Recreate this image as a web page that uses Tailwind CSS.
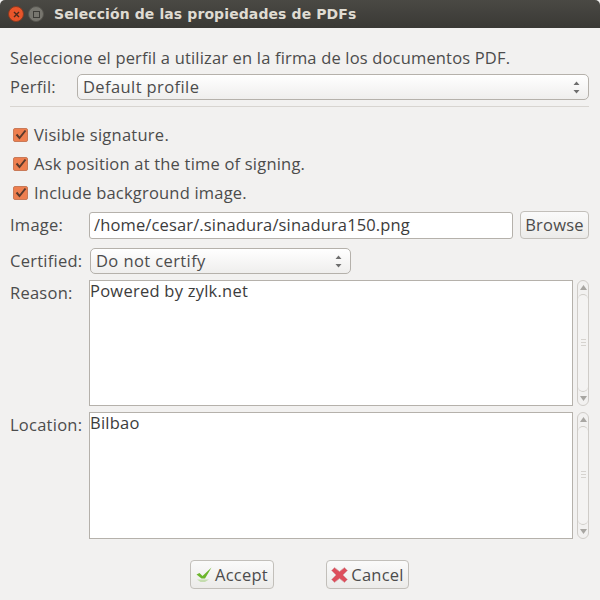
<!DOCTYPE html>
<html lang="es">
<head>
    <meta charset="UTF-8">
    <title>Selección de las propiedades de PDFs</title>
    <script src="https://cdn.jsdelivr.net/npm/@tailwindcss/browser@4"></script>
</head>
<body class="w-[600px] h-[600px] overflow-hidden bg-[#f2f1f0] text-[#4c4c4c] font-['Open_Sans','Noto_Sans',sans-serif] text-[16.5px] tracking-[0.25px] leading-[20px]">

    <!-- Title bar -->
    <div class="h-[28px] flex items-center rounded-t-[5px] bg-gradient-to-b from-[#4a4944] to-[#3a3935] pl-[8px]">
        <div class="w-[16px] h-[16px] rounded-full bg-[#e8552a] border border-[#8a3a20] flex items-center justify-center">
            <svg width="7" height="7" viewBox="0 0 7 7"><path d="M1 1L6 6M6 1L1 6" stroke="#4a2a1c" stroke-width="1.4"/></svg>
        </div>
        <div class="ml-[4px] w-[16px] h-[16px] rounded-full bg-[#77766f] border border-[#55544e] flex items-center justify-center">
            <div class="w-[7px] h-[7px] border border-[#3c3b37]"></div>
        </div>
        <div class="ml-[10px] text-[#dfdbd2] font-bold text-[14px] tracking-[0.1px] font-['DejaVu_Sans','Noto_Sans',sans-serif]">Selección de las propiedades de PDFs</div>
    </div>

    <div class="pl-[10px] pr-[11px]">
        <div class="h-[46px] pt-[20px] whitespace-nowrap tracking-[0.17px]">Seleccione el perfil a utilizar en la firma de los documentos PDF.</div>

        <div class="flex items-center mb-[6px]">
            <div class="w-[67px]">Perfil:</div>
            <div class="flex-1 h-[26px] rounded-[5px] border border-[#b5b1ab] bg-gradient-to-b from-white to-[#efeeed] flex items-center justify-between pl-[5px] pr-[8px]">
                <span class="tracking-[0.4px]">Default profile</span>
                <svg width="7" height="13" viewBox="0 0 7 13"><path d="M3.5 0.5L6.5 4H0.5ZM3.5 12.5L0.5 9H6.5Z" fill="#6e6e6e"/></svg>
            </div>
        </div>
        <div class="h-px bg-[#d8d5d1] mb-[18px]"></div>

        <!-- Checkboxes -->
        <div class="flex flex-col gap-[9px] pl-[3px] mb-[8px]">
            <div class="h-[20px] flex items-center gap-[6px]">
                <div class="w-[15px] h-[14px] rounded-[2px] bg-[#ee7f4f] border border-[#c97a58] flex items-center justify-center">
                    <svg width="13" height="12" viewBox="0 0 13 12"><path d="M2.5 5.5L5.5 9L11.5 1.5" fill="none" stroke="#5a3a2c" stroke-width="2"/></svg>
                </div>
                <span>Visible signature.</span>
            </div>
            <div class="h-[20px] flex items-center gap-[6px]">
                <div class="w-[15px] h-[14px] rounded-[2px] bg-[#ee7f4f] border border-[#c97a58] flex items-center justify-center">
                    <svg width="13" height="12" viewBox="0 0 13 12"><path d="M2.5 5.5L5.5 9L11.5 1.5" fill="none" stroke="#5a3a2c" stroke-width="2"/></svg>
                </div>
                <span class="tracking-[0.2px]">Ask position at the time of signing.</span>
            </div>
            <div class="h-[20px] flex items-center gap-[6px]">
                <div class="w-[15px] h-[14px] rounded-[2px] bg-[#ee7f4f] border border-[#c97a58] flex items-center justify-center">
                    <svg width="13" height="12" viewBox="0 0 13 12"><path d="M2.5 5.5L5.5 9L11.5 1.5" fill="none" stroke="#5a3a2c" stroke-width="2"/></svg>
                </div>
                <span class="tracking-[0.2px]">Include background image.</span>
            </div>
        </div>

        <!-- Image -->
        <div class="flex items-center h-[28px] mb-[9px]">
            <div class="w-[79px]">Image:</div>
            <div class="w-[424px] h-[27px] rounded-[3px] border border-[#b5b1ab] bg-white flex items-center pl-[4px] text-[#3c3c3c] tracking-[0.14px]">/home/cesar/.sinadura/sinadura150.png</div>
            <div class="ml-[7px] w-[69px] h-[28px] rounded-[4px] border border-[#c2bfba] bg-gradient-to-b from-[#fafafa] to-[#ecebe9] flex items-center justify-center">Browse</div>
        </div>

        <!-- Certified -->
        <div class="flex items-center h-[26px] mb-[6px]">
            <div class="w-[80px]">Certified:</div>
            <div class="w-[261px] h-[26px] rounded-[5px] border border-[#b5b1ab] bg-gradient-to-b from-white to-[#efeeed] flex items-center justify-between pl-[5px] pr-[8px]">
                <span class="tracking-[0.4px]">Do not certify</span>
                <svg width="7" height="13" viewBox="0 0 7 13"><path d="M3.5 0.5L6.5 4H0.5ZM3.5 12.5L0.5 9H6.5Z" fill="#6e6e6e"/></svg>
            </div>
        </div>

        <!-- Reason -->
        <div class="flex h-[126px] mb-[6px]">
            <div class="w-[79px] pt-[3px]">Reason:</div>
            <div class="w-[484px] border border-[#b5b1ab] bg-white text-[#3c3c3c]">Powered by zylk.net</div>
            <div class="ml-[4px] w-[12px] rounded-[6px] border border-[#cfccc8] flex flex-col items-center overflow-hidden">
                <svg class="my-[4px] shrink-0" width="7" height="5" viewBox="0 0 7 5"><path d="M3.5 0L7 5H0Z" fill="#a8a6a2"/></svg>
                <div class="flex-1 w-full rounded-[6px] border-y border-[#cfccc8] bg-[#f4f3f2] flex items-center justify-center">
                    <div class="w-[5px] h-[9px] bg-[repeating-linear-gradient(#d6d3cf_0_1px,transparent_1px_3px)]"></div>
                </div>
                <svg class="my-[4px] shrink-0" width="7" height="5" viewBox="0 0 7 5"><path d="M3.5 5L7 0H0Z" fill="#a8a6a2"/></svg>
            </div>
        </div>

        <!-- Location -->
        <div class="flex h-[127px] mb-[21px]">
            <div class="w-[79px] pt-[3px] whitespace-nowrap">Location:</div>
            <div class="w-[484px] border border-[#b5b1ab] bg-white text-[#3c3c3c]">Bilbao</div>
            <div class="ml-[4px] w-[12px] rounded-[6px] border border-[#cfccc8] flex flex-col items-center overflow-hidden">
                <svg class="my-[4px] shrink-0" width="7" height="5" viewBox="0 0 7 5"><path d="M3.5 0L7 5H0Z" fill="#a8a6a2"/></svg>
                <div class="flex-1 w-full rounded-[6px] border-y border-[#cfccc8] bg-[#f4f3f2] flex items-center justify-center">
                    <div class="w-[5px] h-[9px] bg-[repeating-linear-gradient(#d6d3cf_0_1px,transparent_1px_3px)]"></div>
                </div>
                <svg class="my-[4px] shrink-0" width="7" height="5" viewBox="0 0 7 5"><path d="M3.5 5L7 0H0Z" fill="#a8a6a2"/></svg>
            </div>
        </div>

        <!-- Buttons -->
        <div class="flex pl-[180px]">
            <div class="w-[84px] h-[29px] rounded-[4px] border border-[#c2bfba] bg-gradient-to-b from-[#fafafa] to-[#ecebe9] flex items-center justify-center gap-[3px]">
                <svg width="16" height="15" viewBox="0 0 16 15"><path d="M0.5 7.5L3.5 6L6.5 9L15.5 0.5L9 11.5H5.5Z" fill="#6cb62c"/><path d="M1 12.5H13L9 15H4.5Z" fill="#c4dcae"/></svg>
                <span>Accept</span>
            </div>
            <div class="ml-[52px] w-[83px] h-[29px] rounded-[4px] border border-[#c2bfba] bg-gradient-to-b from-[#fafafa] to-[#ecebe9] flex items-center justify-center gap-[3px]">
                <svg width="17" height="16" viewBox="0 0 17 16"><path d="M3.5 0.5L8.5 4.5L13.5 0.5L16.5 3.5L12 8L16.5 12.5L13.5 15.5L8.5 11.5L3.5 15.5L0.5 12.5L5 8L0.5 3.5Z" fill="#dd4f5c" stroke="#d0b0b4" stroke-width="0.6"/></svg>
                <span>Cancel</span>
            </div>
        </div>
    </div>
</body>
</html>
